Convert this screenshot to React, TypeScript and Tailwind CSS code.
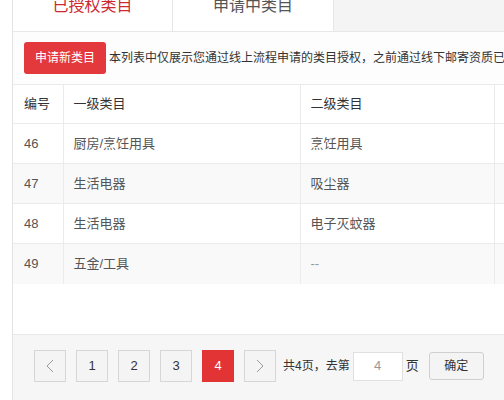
import React from "react";

const rows = [
  { id: 46, first: "厨房/烹饪用具", second: "烹饪用具" },
  { id: 47, first: "生活电器", second: "吸尘器" },
  { id: 48, first: "生活电器", second: "电子灭蚊器" },
  { id: 49, first: "五金/工具", second: "--" },
];

function Chevron({ dir }: { dir: "left" | "right" }) {
  return (
    <svg width="8" height="14" viewBox="0 0 8 14" fill="none">
      <polyline
        points={dir === "left" ? "7,1 1,7 7,13" : "1,1 7,7 1,13"}
        stroke="#9a9a9a"
        strokeWidth="1"
      />
    </svg>
  );
}

export default function App() {
  return (
    <div
      className="flex w-[504px] h-[400px] bg-white overflow-hidden text-[#333]"
      style={{ fontFamily: '"Liberation Sans", "Noto Sans CJK SC", sans-serif' }}
    >
      {/* left gutter */}
      <div className="w-[12px] shrink-0 bg-white" />

      {/* Panel */}
      <div className="flex flex-col flex-1 min-w-0 border-l border-[#e3e3e3] overflow-hidden">
        {/* Tabs */}
        <div className="flex h-[32px] shrink-0 bg-[#f4f4f4] border-b border-[#e8e8e8]">
          <div className="w-[160px] bg-white border-r border-[#e6e6e6] text-center text-[16px] leading-[12px] text-[#cc2a2f]">
            已授权类目
          </div>
          <div className="w-[161px] bg-white border-r border-[#e6e6e6] text-center text-[16px] leading-[12px] text-[#555]">
            申请中类目
          </div>
        </div>

        {/* Toolbar */}
        <div className="flex items-center px-[11px] pt-[10px] pb-[10px] bg-[#fdfdfd] whitespace-nowrap">
          <button className="w-[82px] h-[32px] shrink-0 rounded-[3px] bg-[#e4393c] text-white text-[12px]">
            申请新类目
          </button>
          <span className="ml-[3px] text-[12px] text-[#333]">
            本列表中仅展示您通过线上流程申请的类目授权，之前通过线下邮寄资质已获得的类目授权请在此处查看
          </span>
        </div>

        {/* Table */}
        <div className="h-[250px] shrink-0 bg-white">
          <table className="table-fixed w-[600px] border-collapse text-[13px]">
            <colgroup>
              <col className="w-[50px]" />
              <col className="w-[237px]" />
              <col className="w-[194px]" />
              <col />
            </colgroup>
            <thead>
              <tr className="h-[39px] border-y border-[#ebebeb] bg-white">
                <th className="pl-[11px] text-left font-normal border-r border-[#ebebeb]">编号</th>
                <th className="pl-[10px] text-left font-normal border-r border-[#ebebeb]">一级类目</th>
                <th className="pl-[10px] text-left font-normal border-r border-[#ebebeb]">二级类目</th>
                <th className="pl-[10px] text-left font-normal">操作</th>
              </tr>
            </thead>
            <tbody>
              {rows.map((r, i) => (
                <tr
                  key={r.id}
                  className={`h-[40px] ${i < rows.length - 1 ? "border-b border-[#ebebeb]" : ""} ${
                    i % 2 === 1 ? "bg-[#f9f9f9]" : "bg-white"
                  }`}
                >
                  <td className="pl-[11px] border-r border-[#ebebeb] text-[#555]">{r.id}</td>
                  <td className="pl-[10px] border-r border-[#ebebeb] text-[#555]">{r.first}</td>
                  <td className={`pl-[10px] border-r border-[#ebebeb] ${r.second === "--" ? "text-[#999]" : "text-[#555]"}`}>
                    {r.second}
                  </td>
                  <td className="pl-[10px]" />
                </tr>
              ))}
            </tbody>
          </table>
        </div>

        {/* Pagination */}
        <div className="flex-1 bg-[#f6f6f6] border-t border-[#e9e9e9] pl-[21px] pt-[15px] whitespace-nowrap">
          <div className="flex items-center">
            <div className="flex items-center gap-[10px]">
              <button className="w-[32px] h-[32px] flex items-center justify-center border border-[#d6d6d6] bg-[#f4f4f4]">
                <Chevron dir="left" />
              </button>
              {[1, 2, 3].map((n) => (
                <button
                  key={n}
                  className="w-[32px] h-[32px] flex items-center justify-center border border-[#d6d6d6] bg-[#f4f4f4] text-[13px] text-[#333]"
                >
                  {n}
                </button>
              ))}
              <button className="w-[32px] h-[32px] flex items-center justify-center bg-[#e23434] text-[13px] text-white">
                4
              </button>
              <button className="w-[32px] h-[32px] flex items-center justify-center border border-[#d6d6d6] bg-[#f4f4f4]">
                <Chevron dir="right" />
              </button>
            </div>
            <span className="ml-[7px] text-[12px] text-[#333]">共4页，去第</span>
            <div className="ml-[3px] w-[50px] h-[29px] flex items-center justify-center bg-white border border-[#e0e0e0] text-[13px] text-[#999]">
              4
            </div>
            <span className="ml-[3px] text-[13px] text-[#333]">页</span>
            <button className="ml-[10px] w-[55px] h-[28px] rounded-[3px] border border-[#d0d0d0] bg-[#f4f4f4] text-[12px] text-[#333]">
              确定
            </button>
          </div>
        </div>
      </div>
    </div>
  );
}
